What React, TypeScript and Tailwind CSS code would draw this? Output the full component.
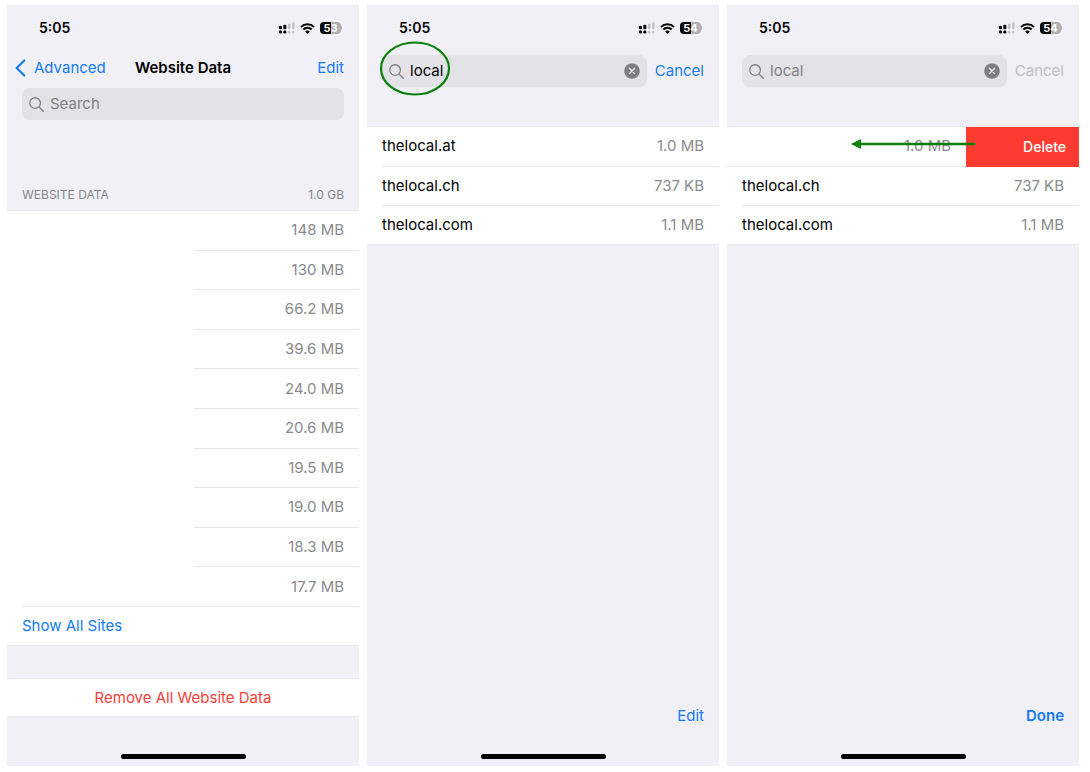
import type { ReactNode } from 'react'

interface Site {
  name: string
  size: string
}

const sizes = [
  '148 MB',
  '130 MB',
  '66.2 MB',
  '39.6 MB',
  '24.0 MB',
  '20.6 MB',
  '19.5 MB',
  '19.0 MB',
  '18.3 MB',
  '17.7 MB',
]

const sites: Site[] = [
  { name: 'thelocal.at', size: '1.0 MB' },
  { name: 'thelocal.ch', size: '737 KB' },
  { name: 'thelocal.com', size: '1.1 MB' },
]

function SignalIcon() {
  return (
    <svg width="16" height="12" viewBox="0 0 16 12" aria-hidden="true">
      <g fill="#000">
        <rect x="0" y="3.7" width="3" height="3.6" rx="1" />
        <rect x="4.3" y="2.7" width="3" height="4.6" rx="1" />
        <rect x="0" y="8.5" width="3" height="3" rx="1.2" />
        <rect x="4.3" y="8.5" width="3" height="3" rx="1.2" />
      </g>
      <g fill="#c3c3c7">
        <rect x="8.8" y="1.5" width="2.5" height="5.8" rx="1" />
        <rect x="13" y="0.3" width="2.5" height="7" rx="1" />
        <rect x="8.8" y="8.7" width="2.5" height="2.8" rx="1.2" />
        <rect x="13" y="8.7" width="2.5" height="2.8" rx="1.2" />
      </g>
    </svg>
  )
}

function WifiIcon() {
  return (
    <svg width="15" height="11" viewBox="0 0 15 11" aria-hidden="true">
      <g fill="none" stroke="#000" strokeWidth="2.1">
        <path d="M1 4C4.7.4 10.3.4 14 4" />
        <path d="M3.3 6.6c2.4-2.3 6-2.3 8.4 0" />
      </g>
      <path d="M5.2 8.5c1.3-1.2 3.3-1.2 4.6 0L7.5 10.9z" />
    </svg>
  )
}

function Battery({ level }: { level: number }) {
  return (
    <div className="flex items-center">
      <div
        className="flex h-3 w-[21px] items-center justify-center rounded text-[11px] leading-3 font-bold text-white"
        style={{ background: `linear-gradient(to right, #000 ${level}%, #b0b0b4 ${level}%)` }}
      >
        {level}
      </div>
      <div className="h-1 w-px rounded-r bg-[#b0b0b4]" />
    </div>
  )
}

function SearchIcon() {
  return (
    <svg width="15" height="15" viewBox="0 0 16 16" fill="none" stroke="#808085" strokeWidth="1.4" strokeLinecap="round" aria-hidden="true">
      <circle cx="6.5" cy="6.5" r="5.7" />
      <path d="M10.7 10.7l4.5 4.5" />
    </svg>
  )
}

function Phone({ battery, children }: { battery: number; children: ReactNode }) {
  return (
    <section className="flex min-w-0 flex-col bg-[#f1f0f6] pb-[7px]">
      <div className="flex h-[46px] items-center justify-between pr-[17px] pl-8">
        <span className="text-sm font-semibold">5:05</span>
        <div className="flex items-center gap-[5px]">
          <SignalIcon />
          <WifiIcon />
          <Battery level={battery} />
        </div>
      </div>
      {children}
      <div className="h-[5px] w-[125px] self-center rounded-full bg-black" />
    </section>
  )
}

function SearchRow({ disabled = false, circled = false }: { disabled?: boolean; circled?: boolean }) {
  return (
    <div className="relative mt-1 flex items-center gap-2 px-[15px]">
      <div className="flex h-8 min-w-0 flex-1 items-center gap-[6px] rounded-lg bg-[#e3e2e7] px-[7px]">
        <SearchIcon />
        <input
          type="text"
          aria-label="Search websites"
          defaultValue="local"
          className={`min-w-0 flex-1 outline-none ${disabled ? 'text-[#808085]' : 'text-black'}`}
        />
        <button type="button" aria-label="Clear search">
          <svg width="16" height="16" viewBox="0 0 16 16" aria-hidden="true">
            <circle cx="8" cy="8" r="7.8" fill="#7d7d82" />
            <path d="M5.3 5.3l5.4 5.4M10.7 5.3l-5.4 5.4" stroke="#ecebf0" strokeWidth="1.3" strokeLinecap="round" />
          </svg>
        </button>
      </div>
      <button type="button" disabled={disabled} className={disabled ? 'text-[#bebec3]' : 'text-[#137bf5]'}>
        Cancel
      </button>
      {circled && (
        <svg className="pointer-events-none absolute -top-[14px] left-3" width="72" height="56" viewBox="0 0 72 56" aria-hidden="true">
          <ellipse cx="36" cy="27.5" rx="34" ry="26" fill="none" stroke="#0a800a" strokeWidth="2.2" />
        </svg>
      )}
    </div>
  )
}

function SiteRow({ site, last, colSpan }: { site: Site; last: boolean; colSpan?: number }) {
  const line = last ? '' : 'border-b border-[#e6e6e9]'

  return (
    <tr>
      <td className="w-[15px]" />
      <td className={line}>{site.name}</td>
      <td colSpan={colSpan} className={`pr-[15px] text-right text-[#8a8a8e] ${line}`}>
        {site.size}
      </td>
    </tr>
  )
}

const siteTable = 'mt-[39px] h-[119px] w-full border-separate border-spacing-0 border-y border-[#e6e6e9] bg-white'

export default function App() {
  return (
    <main className="grid min-h-screen grid-cols-3 gap-2 bg-white pt-[5px] pr-[11px] pb-[6px] pl-[7px] font-['Inter',sans-serif] text-[15px] leading-5 text-black">
      <Phone battery={53}>
        <header className="grid h-[33px] grid-cols-[1fr_auto_1fr] items-center">
          <button type="button" className="flex items-center gap-2 pl-2 text-[#137bf5]">
            <svg width="11" height="18" viewBox="0 0 11 18" fill="none" stroke="currentColor" strokeWidth="2.2" strokeLinecap="round" strokeLinejoin="round" aria-hidden="true">
              <path d="M9.3 1.5L1.7 9l7.6 7.5" />
            </svg>
            Advanced
          </button>
          <h1 className="font-semibold">Website Data</h1>
          <button type="button" className="justify-self-end pr-[15px] text-[#137bf5]">
            Edit
          </button>
        </header>

        <div className="mx-[15px] mt-1 flex h-8 items-center gap-[6px] rounded-lg bg-[#e3e2e7] px-[7px]">
          <SearchIcon />
          <input
            type="text"
            aria-label="Search"
            placeholder="Search"
            className="min-w-0 flex-1 outline-none placeholder:text-[#808085]"
          />
        </div>

        <div className="mt-[60px] flex h-[31px] items-center justify-between border-b border-[#e6e6e9] px-[15px] text-xs text-[#86868b]">
          <h2>WEBSITE DATA</h2>
          <span>1.0 GB</span>
        </div>

        <table className="h-[396px] w-full border-separate border-spacing-0 bg-white text-right text-[#8a8a8e]">
          <tbody>
            {sizes.map((size, i) => {
              const last = i === sizes.length - 1

              return (
                <tr key={size}>
                  <td className="w-[15px]" />
                  <td className={last ? 'w-[172px] border-b border-[#e6e6e9]' : 'w-[172px]'} />
                  <td className="border-b border-[#e6e6e9] pr-[15px]">{size}</td>
                </tr>
              )
            })}
          </tbody>
        </table>

        <button type="button" className="h-[39px] border-b border-[#e6e6e9] bg-white px-[15px] text-left text-[#137bf5]">
          Show All Sites
        </button>
        <button type="button" className="mt-8 mb-auto h-[39px] border-y border-[#e6e6e9] bg-white text-[#f5423a]">
          Remove All Website Data
        </button>
      </Phone>

      <Phone battery={54}>
        <SearchRow circled />
        <table className={siteTable}>
          <tbody>
            {sites.map((site, i) => (
              <SiteRow key={site.name} site={site} last={i === sites.length - 1} />
            ))}
          </tbody>
        </table>
        <button type="button" className="mt-auto mr-[15px] mb-7 self-end text-[#137bf5]">
          Edit
        </button>
      </Phone>

      <Phone battery={54}>
        <SearchRow disabled />
        <div className="relative">
          <table className={siteTable}>
            <tbody>
              <tr>
                <td colSpan={2} className="border-b border-[#e6e6e9]" />
                <td className="border-b border-[#e6e6e9] pr-[15px] text-right text-[#8a8a8e]">{sites[0].size}</td>
                <td className="w-[113px] bg-[#fe3b31] p-0">
                  <button type="button" className="w-full pr-[13px] text-right text-sm font-medium text-white">
                    Delete
                  </button>
                </td>
              </tr>
              {sites.slice(1).map((site, i) => (
                <SiteRow key={site.name} site={site} last={i === 1} colSpan={2} />
              ))}
            </tbody>
          </table>
          {/* swipe direction */}
          <svg className="pointer-events-none absolute top-[52px] right-[104px]" width="124" height="10" viewBox="0 0 124 10" aria-hidden="true">
            <path d="M8 5h116" stroke="#0a800a" strokeWidth="2.4" />
            <path d="M0 5L10 0v10z" fill="#0a800a" />
          </svg>
        </div>
        <button type="button" className="mt-auto mr-[15px] mb-7 self-end font-semibold text-[#137bf5]">
          Done
        </button>
      </Phone>
    </main>
  )
}
